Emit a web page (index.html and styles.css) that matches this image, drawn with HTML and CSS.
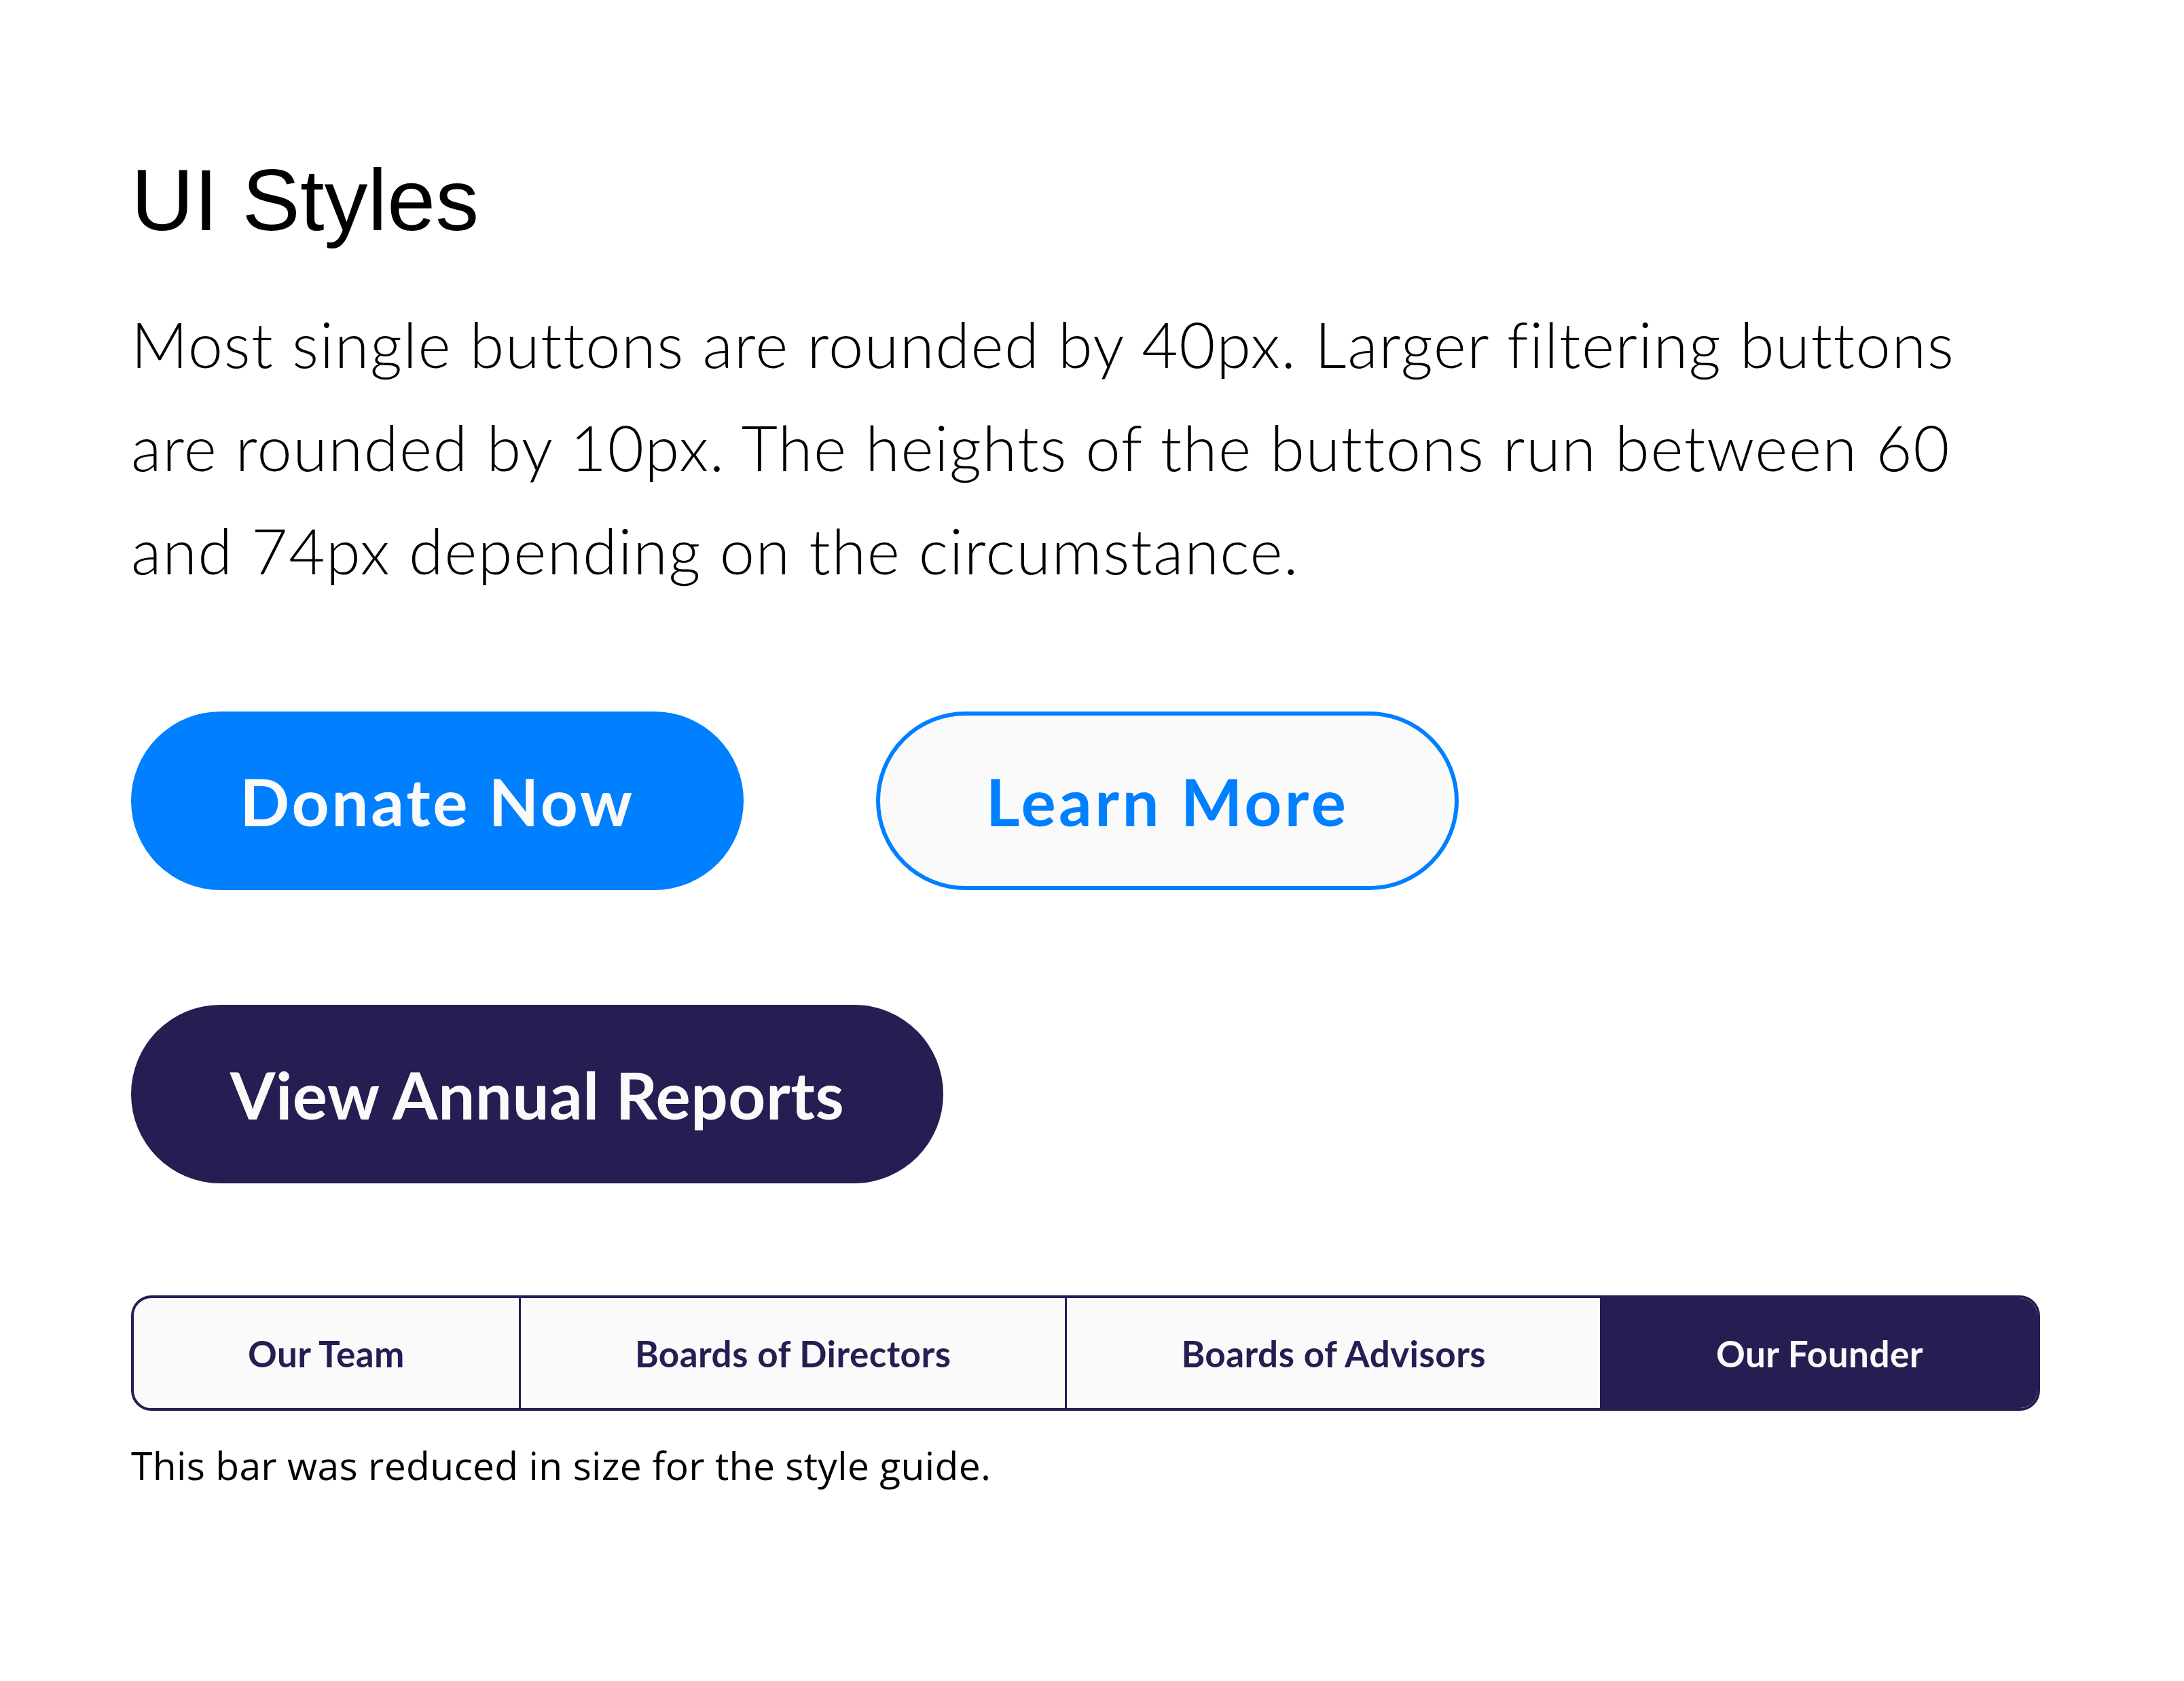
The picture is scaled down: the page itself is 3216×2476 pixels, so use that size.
FILE: index.html
```html
<!DOCTYPE html>
<html lang="en">
<head>
<meta charset="utf-8">
<title>UI Styles</title>
<link rel="stylesheet" href="styles.css">
</head>
<body>
<main class="page">
  <h1 class="title">UI Styles</h1>
  <p class="intro">Most single buttons are rounded by 40px. Larger filtering buttons are rounded by 10px. The heights of the buttons run between 60 and 74px depending on the circumstance.</p>
  <div class="button-row">
    <a class="btn btn-primary">Donate Now</a>
    <a class="btn btn-outline">Learn More</a>
  </div>
  <div class="button-row">
    <a class="btn btn-dark">View Annual Reports</a>
  </div>
  <nav class="tabs">
    <span class="tab">Our Team</span>
    <span class="tab">Boards of Directors</span>
    <span class="tab">Boards of Advisors</span>
    <span class="tab tab-active">Our Founder</span>
  </nav>
  <p class="caption">This bar was reduced in size for the style guide.</p>
</main>
</body>
</html>
```

FILE: styles.css
```css
html, body {
  margin: 0;
  padding: 0;
  background: #ffffff;
}

.page {
  padding: 231px 0 0 193px;
  display: flex;
  flex-direction: column;
  align-items: flex-start;
}

.title {
  margin: 0;
  font-family: "Liberation Sans", Arial, sans-serif;
  font-weight: 400;
  font-size: 128px;
  line-height: 128px;
  color: #000000;
}

.intro {
  margin: 72px 0 0 0;
  width: 2760px;
  font-family: Lato, sans-serif;
  font-weight: 300;
  font-size: 92px;
  line-height: 152px;
  letter-spacing: 1.6px;
  color: #000000;
}

.button-row {
  display: flex;
  gap: 195px;
  margin-top: 161px;
}

.button-row + .button-row {
  margin-top: 169px;
}

.btn {
  box-sizing: border-box;
  display: inline-flex;
  align-items: center;
  justify-content: center;
  height: 263px;
  border-radius: 132px;
  font-family: Lato, sans-serif;
  font-weight: 700;
  font-size: 96px;
  text-decoration: none;
  white-space: nowrap;
}

.btn-primary {
  width: 902px;
  background: #0080ff;
  color: #fafafa;
  letter-spacing: 3.8px;
}

.btn-outline {
  width: 858px;
  background: #fafafa;
  border: 6px solid #0080ff;
  color: #0080ff;
  letter-spacing: 4.4px;
}

.btn-dark {
  width: 1196px;
  background: #251e52;
  color: #fafafa;
  letter-spacing: 0.5px;
}

.tabs {
  display: flex;
  margin-top: 165px;
  border: 4px solid #251e52;
  border-radius: 30px;
  overflow: hidden;
  background: #fafafa;
}

.tab {
  display: flex;
  align-items: center;
  height: 162px;
  padding: 0 168px;
  font-family: Lato, sans-serif;
  font-weight: 700;
  font-size: 53px;
  letter-spacing: 0.45px;
  color: #251e52;
  white-space: nowrap;
}

.tab + .tab {
  border-left: 3px solid #251e52;
}

.tab-active {
  background: #251e52;
  color: #fafafa;
  margin: -4px -4px -4px 0;
  padding: 4px 172px 4px 168px;
}

.caption {
  margin: 43px 0 0 0;
  font-family: "Open Sans", sans-serif;
  font-weight: 400;
  font-size: 57px;
  line-height: 74px;
  letter-spacing: 0.3px;
  color: #000000;
}
```
